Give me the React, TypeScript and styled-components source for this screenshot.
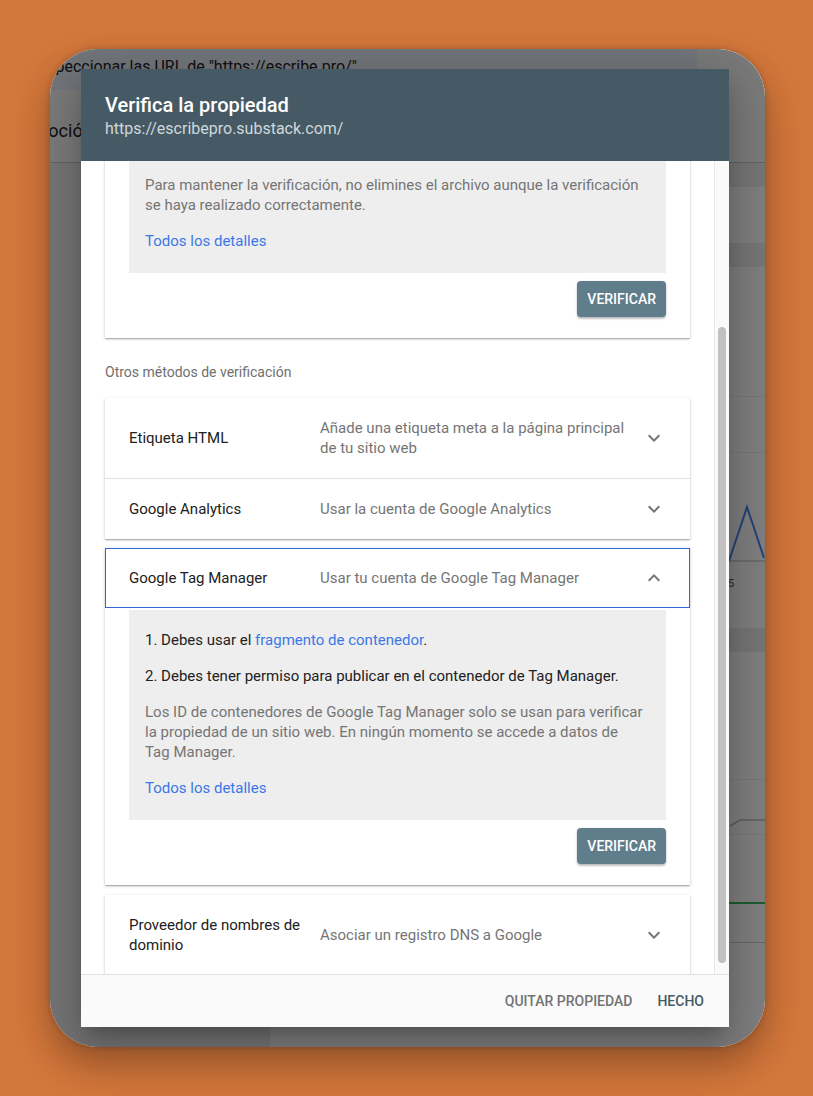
import { useLayoutEffect, useRef, useState } from "react";
import styled, { createGlobalStyle, css } from "styled-components";

const GlobalStyle = createGlobalStyle`
  html, body {
    margin: 0;
    padding: 0;
  }

  body {
    background: #d4773b;
    font-family: Roboto, "Noto Sans", Arial, sans-serif;
    -webkit-font-smoothing: antialiased;
  }

  * {
    box-sizing: border-box;
  }
`;

const Stage = styled.div`
  height: 1096px;
  padding: 49px 0 0 50px;
  overflow: hidden;
`;

const Frame = styled.div`
  position: relative;
  width: 715px;
  height: 998px;
  border-radius: 48px;
  overflow: hidden;
  background: #ececec;
  box-shadow: 0 18px 38px rgba(0, 0, 0, 0.32), 0 0 6px rgba(0, 0, 0, 0.2);
`;

/* the page that sits under the dialog */

const Page = styled.div`
  display: flex;
  flex-direction: column;
  height: 100%;
`;

const TopBar = styled.div`
  display: flex;
  height: 41px;
  background: #e4ebf5;
  white-space: nowrap;
`;

const TopBarTitle = styled.div`
  flex: 1;
  padding-top: 8px;
  font-size: 16px;
  line-height: 20px;
  color: #202124;

  span {
    display: inline-block;
    margin-left: -16px;
  }
`;

const TopBarEnd = styled.div`
  width: 68px;
  background: #f4f4f4;
`;

const TabBand = styled.div`
  height: 73px;
  padding-top: 29px;
  background: #f6f6f6;
  border-bottom: 1px solid #c4c4c4;
  font-size: 18px;
  line-height: 24px;
  color: #202124;
  white-space: nowrap;

  span {
    display: inline-block;
    margin-left: -45px;
  }
`;

const PageBody = styled.div`
  flex: 1;
  display: flex;
`;

const Sidebar = styled.div`
  width: 220px;
  background: #ececec;
`;

const Main = styled.div`
  flex: 1;
  display: flex;
  flex-direction: column;
  background: #fff;
`;

const Band = styled.div<{ h: number; tone?: "stripe" | "plain" }>`
  height: ${({ h }) => h}px;
  background: ${({ tone }) => (tone === "stripe" ? "#ececec" : "#fff")};
`;

const Rule = styled.div<{ color?: string; thick?: number }>`
  height: ${({ thick }) => thick ?? 1}px;
  background: ${({ color }) => color ?? "#eeeeee"};
`;

const ChartBand = styled.div<{ h: number }>`
  height: ${({ h }) => h}px;
  display: flex;
  justify-content: flex-end;

  svg {
    display: block;
  }
`;

/* dialog */

const Scrim = styled.div`
  position: absolute;
  inset: 0;
  display: flex;
  align-items: center;
  padding: 20px 36px 20px 31px;
  background: rgba(0, 0, 0, 0.5);
`;

const Dialog = styled.div`
  width: 648px;
  height: 958px;
  display: flex;
  flex-direction: column;
  background: #fff;
  box-shadow: 0 11px 15px -7px rgba(0, 0, 0, 0.2),
    0 24px 38px 3px rgba(0, 0, 0, 0.14), 0 9px 46px 8px rgba(0, 0, 0, 0.12);
`;

const Header = styled.header`
  padding: 22px 24px;
  background: #455a64;
`;

const Title = styled.h1`
  margin: 0;
  font-size: 20px;
  line-height: 28px;
  font-weight: 500;
  color: #fff;
`;

const Subtitle = styled.div`
  font-size: 16px;
  line-height: 20px;
  color: #cfd8dc;
`;

const BodyWrap = styled.div`
  flex: 1;
  min-height: 0;
  display: flex;
`;

const Scroller = styled.div`
  position: relative;
  flex: 1;
  overflow-y: scroll;
  padding: 24px 24px 6px;
  scrollbar-width: none;

  &::-webkit-scrollbar {
    display: none;
  }
`;

const ScrollTrack = styled.div`
  width: 15px;
  padding: 0 3px;
  background: #fafafa;
  border-left: 1px solid #e8e8e8;
`;

const ScrollThumb = styled.div`
  width: 8px;
  border-radius: 4px;
  background: #c1c1c1;
`;

const SectionLabel = styled.div`
  font-size: 14px;
  line-height: 20px;
  color: #6f6f6f;
  margin: 24px 0 16px;

  &:first-child {
    margin-top: 0;
  }
`;

const Card = styled.div<{ spaced?: boolean }>`
  background: #fff;
  box-shadow: 0 1px 3px rgba(0, 0, 0, 0.2), 0 1px 1px rgba(0, 0, 0, 0.14),
    0 2px 1px -1px rgba(0, 0, 0, 0.08);

  ${({ spaced }) =>
    spaced &&
    css`
      margin: 9px 0 10px;
    `}
`;

const Row = styled.div<{ active?: boolean; divided?: boolean }>`
  display: flex;
  align-items: center;
  min-height: 60px;
  padding: 20px 24px;
  font-size: 15px;
  line-height: 20px;

  ${({ divided }) =>
    divided &&
    css`
      border-top: 1px solid #e0e0e0;
    `}

  ${({ active }) =>
    active &&
    css`
      padding: 19px 23px;
      border: 1px solid #3367d6;
    `}
`;

const RowTitle = styled.div`
  width: 175px;
  margin-right: 16px;
  flex-shrink: 0;
  color: #212121;
`;

const RowDesc = styled.div`
  flex: 1;
  margin-right: 16px;
  color: #757575;
`;

const Chevron = styled.svg`
  width: 24px;
  height: 24px;
  margin: -2px 0;
  flex-shrink: 0;
  fill: #757575;
`;

const Expanded = styled.div`
  padding: 2px 24px 21px;
`;

const InfoBox = styled.div`
  display: flex;
  flex-direction: column;
  gap: 16px;
  padding: 20px 16px 22px;
  background: #eeeeee;
  font-size: 15px;
  line-height: 20px;
`;

const Step = styled.p`
  margin: 0;
  color: #212121;
  display: flex;
  align-items: center;
  gap: 8px;
`;

const Note = styled.p`
  margin: 0;
  color: #757575;
`;

const Link = styled.a`
  color: #3b78e7;
  text-decoration: none;
`;

const Actions = styled.div`
  display: flex;
  justify-content: flex-end;
  margin-top: 8px;
`;

const RaisedButton = styled.button<{ small?: boolean }>`
  height: 36px;
  padding: 0 10px;
  border: 0;
  border-radius: 4px;
  background: #607d8b;
  color: #fff;
  font-family: inherit;
  font-size: 14px;
  font-weight: 500;
  box-shadow: 0 2px 2px rgba(0, 0, 0, 0.24), 0 0 2px rgba(0, 0, 0, 0.12);

  ${({ small }) =>
    small &&
    css`
      height: 30px;
    `}
`;

const Footer = styled.footer`
  display: flex;
  justify-content: flex-end;
  align-items: center;
  gap: 9px;
  height: 53px;
  padding: 0 17px 0 0;
  background: #fafafa;
  border-top: 1px solid #e0e0e0;
`;

const FlatButton = styled.button<{ primary?: boolean }>`
  height: 36px;
  padding: 0 8px;
  border: 0;
  background: none;
  font-family: inherit;
  font-size: 14px;
  font-weight: 500;
  color: ${({ primary }) => (primary ? "#455a64" : "#737373")};
`;

const ExpandMore = () => (
  <Chevron viewBox="0 0 24 24">
    <path d="M16.59 8.59 12 13.17 7.41 8.59 6 10l6 6 6-6z" />
  </Chevron>
);

const ExpandLess = () => (
  <Chevron viewBox="0 0 24 24">
    <path d="M12 8l-6 6 1.41 1.41L12 10.83l4.59 4.58L18 14z" />
  </Chevron>
);

const bands: { h: number; tone?: "stripe" | "plain"; rule?: string; chart?: "peak" | "flat" }[] = [
  { h: 24, tone: "stripe" },
  { h: 56 },
  { h: 24, tone: "stripe" },
  { h: 129, rule: "#eeeeee" },
  { h: 55, rule: "#eeeeee" },
  { h: 175, chart: "peak" },
  { h: 24, tone: "stripe" },
  { h: 127, rule: "#eeeeee" },
  { h: 54, chart: "flat", rule: "#eeeeee" },
  { h: 67, rule: "#3fb860" },
  { h: 38, rule: "#cccccc" },
];

function BackgroundPage() {
  return (
    <Page>
      <TopBar>
        <TopBarTitle>
          <span>Inspeccionar las URL de "https://escribe.pro/"</span>
        </TopBarTitle>
        <TopBarEnd />
      </TopBar>
      <TabBand>
        <span>Promoción</span>
      </TabBand>
      <PageBody>
        <Sidebar />
        <Main>
          {bands.map((b, i) => (
            <div key={i}>
              {b.chart === "peak" ? (
                <ChartBand h={b.h}>
                  <svg width="44" height={b.h}>
                    <line x1="0" y1="108" x2="44" y2="108" stroke="#cccccc" strokeWidth="1.5" />
                    <polyline points="8,108 26,54 43,105" fill="none" stroke="#4a86f0" strokeWidth="2" />
                    <text x="7" y="134" fontSize="11" fill="#555" fontFamily="Roboto, sans-serif">
                      5
                    </text>
                  </svg>
                </ChartBand>
              ) : b.chart === "flat" ? (
                <ChartBand h={b.h}>
                  <svg width="44" height={b.h}>
                    <polyline points="9,46 19,40 44,40" fill="none" stroke="#bdbdbd" strokeWidth="1.5" />
                  </svg>
                </ChartBand>
              ) : (
                <Band h={b.h} tone={b.tone} />
              )}
              {b.rule && <Rule color={b.rule} thick={b.rule === "#3fb860" ? 2 : 1} />}
            </div>
          ))}
        </Main>
      </PageBody>
    </Page>
  );
}

export default function App() {
  const bodyRef = useRef<HTMLDivElement>(null);
  const labelRef = useRef<HTMLDivElement>(null);
  const [thumb, setThumb] = useState({ top: 0, height: 0 });

  useLayoutEffect(() => {
    // the dialog is shown scrolled down to the "other methods" list
    const el = bodyRef.current;
    if (!el || !labelRef.current) return;
    el.scrollTop = labelRef.current.offsetTop - 201;
    const track = el.clientHeight;
    setThumb({
      top: (el.scrollTop / el.scrollHeight) * track,
      height: (el.clientHeight / el.scrollHeight) * track - 5,
    });
  }, []);

  return (
    <>
      <GlobalStyle />
      <Stage>
        <Frame>
          <BackgroundPage />
          <Scrim>
            <Dialog>
              <Header>
                <Title>Verifica la propiedad</Title>
                <Subtitle>https://escribepro.substack.com/</Subtitle>
              </Header>

              <BodyWrap>
                <Scroller ref={bodyRef}>
                  <SectionLabel>Método de verificación recomendado</SectionLabel>
                  <Card>
                    <Row>
                      <RowTitle>Archivo HTML</RowTitle>
                      <RowDesc>Subir un archivo HTML a tu sitio web</RowDesc>
                      <ExpandLess />
                    </Row>
                    <Expanded>
                      <InfoBox>
                        <Step>
                          1. Descarga el archivo: <RaisedButton small>google.html</RaisedButton>
                        </Step>
                        <Step>2. Súbelo a https://escribepro.substack.com/</Step>
                        <Note>
                          Para mantener la verificación, no elimines el archivo aunque la verificación
                          se haya realizado correctamente.
                        </Note>
                        <Link href="#">Todos los detalles</Link>
                      </InfoBox>
                      <Actions>
                        <RaisedButton>VERIFICAR</RaisedButton>
                      </Actions>
                    </Expanded>
                  </Card>

                  <SectionLabel ref={labelRef}>Otros métodos de verificación</SectionLabel>
                  <Card>
                    <Row>
                      <RowTitle>Etiqueta HTML</RowTitle>
                      <RowDesc>Añade una etiqueta meta a la página principal de tu sitio web</RowDesc>
                      <ExpandMore />
                    </Row>
                    <Row divided>
                      <RowTitle>Google Analytics</RowTitle>
                      <RowDesc>Usar la cuenta de Google Analytics</RowDesc>
                      <ExpandMore />
                    </Row>
                  </Card>

                  <Card spaced>
                    <Row active>
                      <RowTitle>Google Tag Manager</RowTitle>
                      <RowDesc>Usar tu cuenta de Google Tag Manager</RowDesc>
                      <ExpandLess />
                    </Row>
                    <Expanded>
                      <InfoBox>
                        <Step>
                          <span>
                            1. Debes usar el <Link href="#">fragmento de contenedor</Link>.
                          </span>
                        </Step>
                        <Step>2. Debes tener permiso para publicar en el contenedor de Tag Manager.</Step>
                        <Note>
                          Los ID de contenedores de Google Tag Manager solo se usan para verificar la
                          propiedad de un sitio web. En ningún momento se accede a datos de{" "}
                          {"Tag\u00a0Manager."}
                        </Note>
                        <Link href="#">Todos los detalles</Link>
                      </InfoBox>
                      <Actions>
                        <RaisedButton>VERIFICAR</RaisedButton>
                      </Actions>
                    </Expanded>
                  </Card>

                  <Card>
                    <Row>
                      <RowTitle>Proveedor de nombres de dominio</RowTitle>
                      <RowDesc>Asociar un registro DNS a Google</RowDesc>
                      <ExpandMore />
                    </Row>
                  </Card>
                </Scroller>
                <ScrollTrack>
                  <ScrollThumb style={{ marginTop: thumb.top, height: thumb.height }} />
                </ScrollTrack>
              </BodyWrap>

              <Footer>
                <FlatButton>QUITAR PROPIEDAD</FlatButton>
                <FlatButton primary>HECHO</FlatButton>
              </Footer>
            </Dialog>
          </Scrim>
        </Frame>
      </Stage>
    </>
  );
}
